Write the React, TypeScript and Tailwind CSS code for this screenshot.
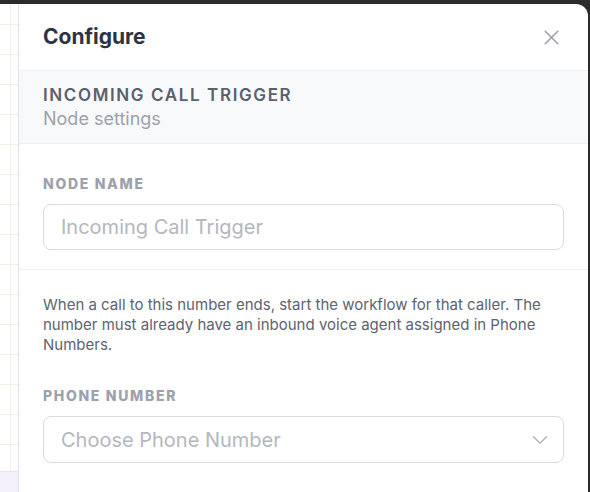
import React from 'react';
import { X, ChevronDown } from 'lucide-react';

const font = { fontFamily: 'Inter, "Noto Sans", sans-serif' };

const App: React.FC = () => {
  return (
    <div
      className="flex h-[492px] w-[590px] bg-[#2b2b2b] pt-1 pr-[2px] overflow-hidden"
      style={font}
    >
      {/* canvas strip */}
      <div className="flex w-[18px] shrink-0 flex-col">
        <div className="flex-1 bg-white bg-[linear-gradient(to_right,#f1efe4_1px,transparent_1px),linear-gradient(to_bottom,#f1efe4_1px,transparent_1px)] bg-[size:30px_30px] bg-[position:10px_20px]" />
        <div className="h-[21px] border-t border-[#e6e3ef] bg-[#f4f1fc]" />
      </div>

      {/* configure panel */}
      <div className="flex flex-1 flex-col rounded-tr-xl border-l border-[#dfe0e8] bg-white">
        <div className="flex h-[67px] shrink-0 items-center justify-between border-b border-[#eef0f3] px-6">
          <h2 className="text-[21px] font-bold text-[#2d3342]">Configure</h2>
          <button className="text-[#9a9eab]">
            <X size={25} strokeWidth={1.4} />
          </button>
        </div>

        <div className="border-b border-[#eef0f3] bg-[#f8f9fb] px-6 py-3">
          <p className="text-[17px] font-semibold leading-6 tracking-[0.095em] text-[#5b606b]">
            INCOMING CALL TRIGGER
          </p>
          <p className="text-[18px] leading-6 text-[#9ca1ab]">Node settings</p>
        </div>

        <div className="border-b border-[#eef0f3] px-6 pt-[30px] pb-[19px]">
          <label className="mb-[10px] block text-[14px] font-extrabold leading-5 tracking-[0.12em] text-[#9ca1ab]">
            NODE NAME
          </label>
          <input
            className="h-[46px] w-full rounded-lg border border-[#dadbdd] px-[17px] text-[20px] text-[#2d3342] outline-none placeholder:text-[#b4b7bd]"
            placeholder="Incoming Call Trigger"
          />
        </div>

        <div className="px-6 pt-[25px]">
          <p className="text-[15px] leading-5 text-[#5d6370]">
            When a call to this number ends, start the workflow for that caller. The
            number must already have an inbound voice agent assigned in Phone Numbers.
          </p>
          <label className="mt-[31px] mb-[10px] block text-[14px] font-extrabold leading-5 tracking-[0.12em] text-[#9ca1ab]">
            PHONE NUMBER
          </label>
          <div className="flex h-[47px] items-center justify-between rounded-lg border border-[#dadbdd] pr-[10px] pl-[17px]">
            <span className="text-[20px] text-[#b4b7bd]">Choose Phone Number</span>
            <ChevronDown size={26} strokeWidth={1} className="text-[#a9acb3]" />
          </div>
        </div>
      </div>
    </div>
  );
};

export default App;
